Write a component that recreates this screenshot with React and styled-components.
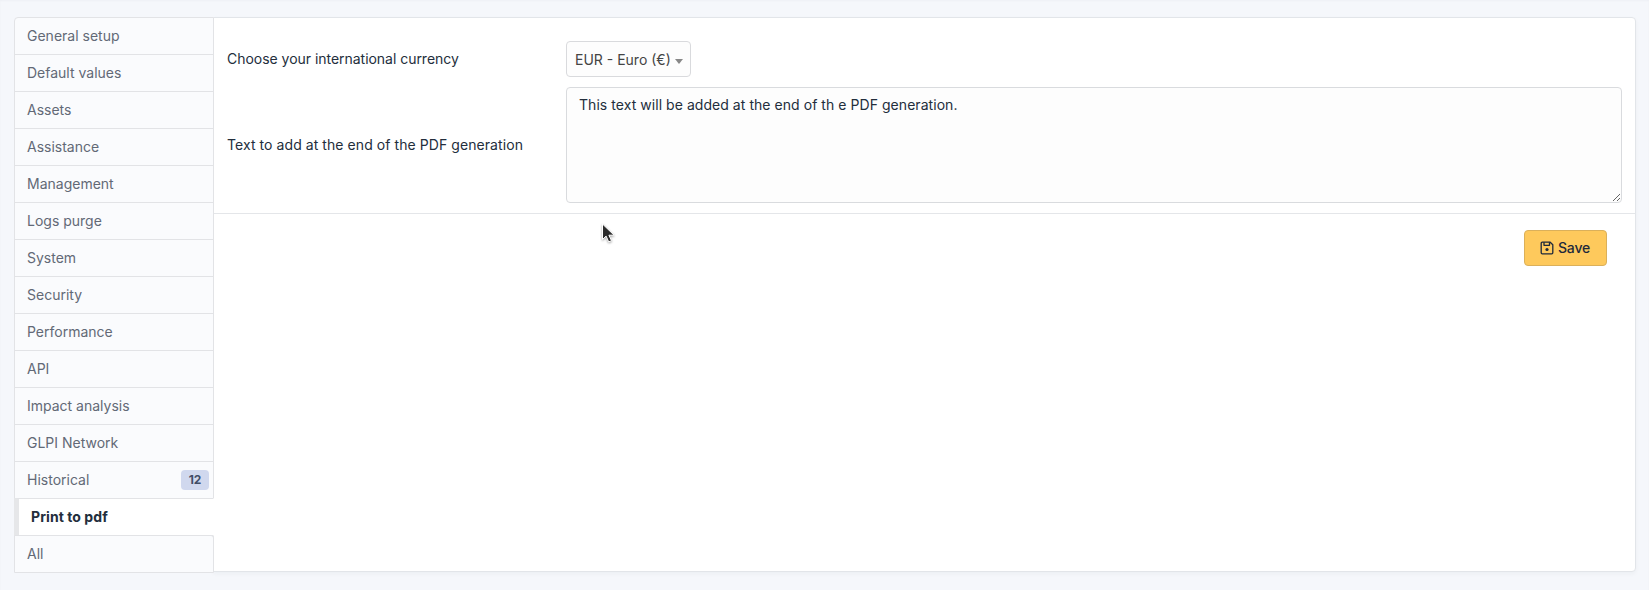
import React from "react";
import styled, { createGlobalStyle, css } from "styled-components";

const GlobalStyle = createGlobalStyle`
  *, *::before, *::after { box-sizing: border-box; }
  body {
    margin: 0;
    background: #f5f7fb;
    color: #232e3c;
    font: 400 14px/20px Inter, "Liberation Sans", sans-serif;
  }
`;

const Page = styled.main`
  display: flex;
  align-items: flex-start;
  height: 590px;
  padding: 17px 13px 0 14px;
  box-shadow: inset 0 1px 2px rgba(35, 46, 60, 0.03);
`;

const TabList = styled.nav`
  display: flex;
  flex-direction: column;
  width: 200px;
  flex: none;
  z-index: 1;
`;

const Tab = styled.a`
  display: flex;
  align-items: center;
  justify-content: space-between;
  height: 38px;
  padding: 0 5px 0 12px;
  border: 1px solid #e2e3e6;
  background: #fafbfd;
  color: #626976;
  text-decoration: none;

  & + & { margin-top: -1px; }
  &:first-child { border-top-left-radius: 4px; }
  &:last-child { border-top-right-radius: 3px; }

  ${({ $active }) =>
    $active &&
    css`
      padding-left: 12px;
      border-left-width: 5px;
      border-left-color: #e6e7e9;
      border-right-color: #fff;
      background: #fff;
      color: #232e3c;
      font-weight: 700;
      letter-spacing: 0.07px;
    `}
`;

const Badge = styled.span`
  height: 20px;
  min-width: 28px;
  margin-right: -1px;
  border-radius: 4px;
  background: #d0d8ee;
  color: #414d66;
  font-size: 12px;
  font-weight: 700;
  line-height: 20px;
  text-align: center;
`;

const Card = styled.section`
  flex: 1;
  height: 555px;
  margin-left: -1px;
  border: 1px solid #e2e5e9;
  border-radius: 0 4px 4px 0;
  background: #fff;
  box-shadow: 0 2px 4px rgba(35, 46, 60, 0.04);
`;

const Fields = styled.div`
  display: grid;
  grid-template-columns: 339px 1fr;
  row-gap: 10px;
  align-items: center;
  padding: 23px 13px 10px;
  border-bottom: 1px solid #e4e6e9;
`;

const Label = styled.label`
  letter-spacing: ${({ $tracking }) => $tracking};
`;

const Select = styled.button`
  display: flex;
  align-items: center;
  justify-content: space-between;
  justify-self: start;
  width: 125px;
  height: 36px;
  padding: 1px 7px 0 8px;
  border: 1px solid #d9dadd;
  border-radius: 4px;
  background: #fdfdfd;
  color: #444;
  font: inherit;
  white-space: nowrap;
`;

const Caret = styled.span`
  margin-top: 3px;
  border: 4px solid transparent;
  border-top: 5px solid #888;
  border-bottom: 0;
`;

const TextArea = styled.textarea`
  display: block;
  width: 100%;
  height: 116px;
  padding: 7px 12px;
  border: 1px solid #d9dbde;
  border-radius: 4px;
  background: #fdfdfd;
  color: #232e3c;
  font: inherit;
  letter-spacing: 0.05px;
  resize: both;
  outline: none;
`;

const Actions = styled.div`
  display: flex;
  justify-content: flex-end;
  padding: 16px 28px;
`;

const SaveButton = styled.button`
  display: flex;
  align-items: center;
  justify-content: center;
  gap: 4px;
  width: 83px;
  height: 36px;
  padding: 0 1px 0 0;
  border: 1px solid #dbb05a;
  border-radius: 4px;
  background: #fec95c;
  color: #1e293b;
  font: inherit;
  font-weight: 500;
  letter-spacing: -0.15px;
`;

const Pointer = styled.svg`
  position: absolute;
  left: 600px;
  top: 222px;
  z-index: 2;
  filter: drop-shadow(0 1px 1px rgba(0, 0, 0, 0.35));
`;

const tabs = [
  "General setup", "Default values", "Assets", "Assistance", "Management",
  "Logs purge", "System", "Security", "Performance", "API",
  "Impact analysis", "GLPI Network", "Historical", "Print to pdf", "All",
];

const SaveIcon = () => (
  <svg width="14" height="14" viewBox="0 0 14 14" fill="none" stroke="currentColor" strokeWidth="1.3" strokeLinejoin="round">
    <path d="M2.3 1.2h7.9l2.6 2.6v7.9a1.1 1.1 0 0 1-1.1 1.1H2.3a1.1 1.1 0 0 1-1.1-1.1V2.3a1.1 1.1 0 0 1 1.1-1.1z" />
    <path d="M4 1.2v3.1h5.5V1.2" />
    <circle cx="7" cy="8.5" r="1.6" fill="currentColor" stroke="none" />
  </svg>
);

export default function App() {
  return (
    <>
      <GlobalStyle />
      <Page>
        <TabList>
          {tabs.map((name) => (
            <Tab key={name} $active={name === "Print to pdf"}>
              {name}
              {name === "Historical" && <Badge>12</Badge>}
            </Tab>
          ))}
        </TabList>
        <Card>
          <Fields>
            <Label $tracking="-0.03px">Choose your international currency</Label>
            <Select type="button">
              EUR - Euro (€)
              <Caret />
            </Select>
            <Label $tracking="0.07px" htmlFor="footer-text">
              Text to add at the end of the PDF generation
            </Label>
            <TextArea
              id="footer-text"
              spellCheck={false}
              defaultValue="This text will be added at the end of th e PDF generation."
            />
          </Fields>
          <Actions>
            <SaveButton type="button">
              <SaveIcon />
              Save
            </SaveButton>
          </Actions>
        </Card>
      </Page>
      <Pointer width="18" height="24" viewBox="0 0 18 24">
        <path d="M2.5 2v15.5l3.6-3.4 2.6 5.8 2.8-1.2-2.6-5.5h5.2z" fill="#2b2b2b" stroke="#fff" />
      </Pointer>
    </>
  );
}
